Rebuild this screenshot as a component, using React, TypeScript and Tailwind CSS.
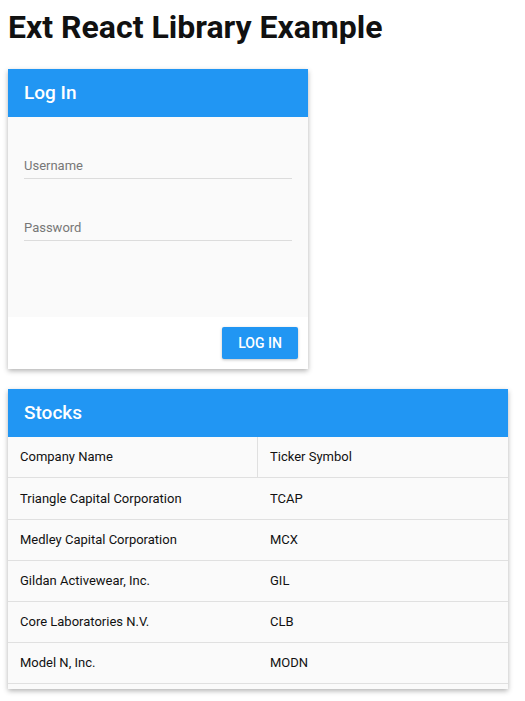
const stocks = [
  { name: "Triangle Capital Corporation", symbol: "TCAP" },
  { name: "Medley Capital Corporation", symbol: "MCX" },
  { name: "Gildan Activewear, Inc.", symbol: "GIL" },
  { name: "Core Laboratories N.V.", symbol: "CLB" },
  { name: "Model N, Inc.", symbol: "MODN" },
];

function Field({ label }: { label: string }) {
  return (
    <div className="border-b border-[#dcdcdc] pb-1">
      <div className="text-[13px] text-[#777] leading-[16px]">{label}</div>
    </div>
  );
}

export default function App() {
  return (
    <div className="bg-white min-h-[701px] px-2 pt-[7px] font-['Roboto',sans-serif] text-[#111]">
      <h1 className="text-[32px] font-bold leading-[40px]">Ext React Library Example</h1>

      {/* Login panel */}
      <div className="w-[300px] mt-[22px] shadow-[0_2px_5px_rgba(0,0,0,0.3)]">
        <div className="h-12 bg-[#2196f3] flex items-center px-4">
          <span className="text-white text-[19px] font-medium">Log In</span>
        </div>
        <div className="h-[200px] bg-[#fafafa] px-4 pt-[41px] flex flex-col gap-[41px]">
          <Field label="Username" />
          <Field label="Password" />
        </div>
        <div className="h-[52px] bg-white flex items-center justify-end px-[10px]">
          <button className="h-8 w-[76px] bg-[#2196f3] text-white text-[14px] font-medium rounded-[2px] shadow-[0_1px_3px_rgba(0,0,0,0.25)]">
            LOG IN
          </button>
        </div>
      </div>

      {/* Stocks grid */}
      <div className="w-[500px] mt-5 shadow-[0_2px_5px_rgba(0,0,0,0.3)]">
        <div className="h-12 bg-[#2196f3] flex items-center px-4">
          <span className="text-white text-[19px] font-medium">Stocks</span>
        </div>
        <div className="bg-[#fafafa]">
          <div className="flex h-[41px] border-b border-[#e0e0e0] text-[13px]">
            <div className="w-[250px] border-r border-[#e0e0e0] flex items-center px-3">Company Name</div>
            <div className="flex-1 flex items-center px-3">Ticker Symbol</div>
          </div>
          {stocks.map((s, i) => (
            <div
              key={s.symbol}
              className={i === 0 ? "flex h-[42px] border-b border-[#e0e0e0] text-[13px]" : "flex h-[41px] border-b border-[#e0e0e0] text-[13px]"}
            >
              <div className="w-[250px] flex items-center px-3">{s.name}</div>
              <div className="flex-1 flex items-center px-3">{s.symbol}</div>
            </div>
          ))}
          <div className="h-[5px]" />
        </div>
      </div>
    </div>
  );
}
